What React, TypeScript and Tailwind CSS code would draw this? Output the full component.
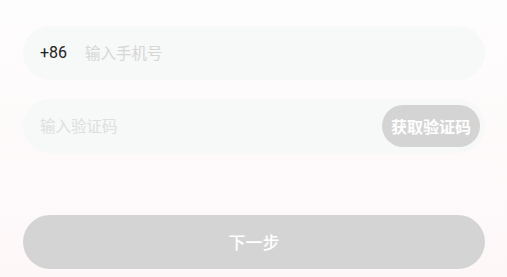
import { useState } from 'react';

export default function App() {
    const [phone, setPhone] = useState('');
    const [code, setCode] = useState('');

    return (
        <div
            className="min-h-screen w-full bg-gradient-to-b from-[#fefdfd] to-[#fdf7f8] pl-[23px] pr-[22px] pt-[26px]"
            style={{ fontFamily: '"Noto Sans CJK SC", "Noto Sans", sans-serif' }}
        >
            <div className="flex h-[54px] items-center rounded-full bg-[#f7f8f8] pl-[17px] pr-4">
                <span className="text-[16px] text-[#222]" style={{ fontFamily: 'Roboto, "Noto Sans CJK SC", sans-serif' }}>+86</span>
                <input
                    value={phone}
                    onChange={e => setPhone(e.target.value)}
                    placeholder="输入手机号"
                    className="ml-[18px] flex-1 bg-transparent text-[15.5px] text-[#222] outline-none placeholder:text-[#d6d6d6]"
                />
            </div>

            <div className="mt-[19px] flex h-[54px] items-center rounded-full bg-[#f7f8f8] pl-[17px] pr-[5px]">
                <input
                    value={code}
                    onChange={e => setCode(e.target.value)}
                    placeholder="输入验证码"
                    className="flex-1 bg-transparent text-[15.5px] text-[#222] outline-none placeholder:text-[#dedede]"
                />
                <button className="flex h-[42px] w-[98px] items-center justify-center rounded-full bg-[#d4d4d4] text-[16px] font-bold text-white">
                    获取验证码
                </button>
            </div>

            <button className="mt-[62px] flex h-[54px] w-full items-center justify-center rounded-full bg-[#d4d4d4] text-[17px] font-medium text-white">
                下一步
            </button>
        </div>
    );
}
